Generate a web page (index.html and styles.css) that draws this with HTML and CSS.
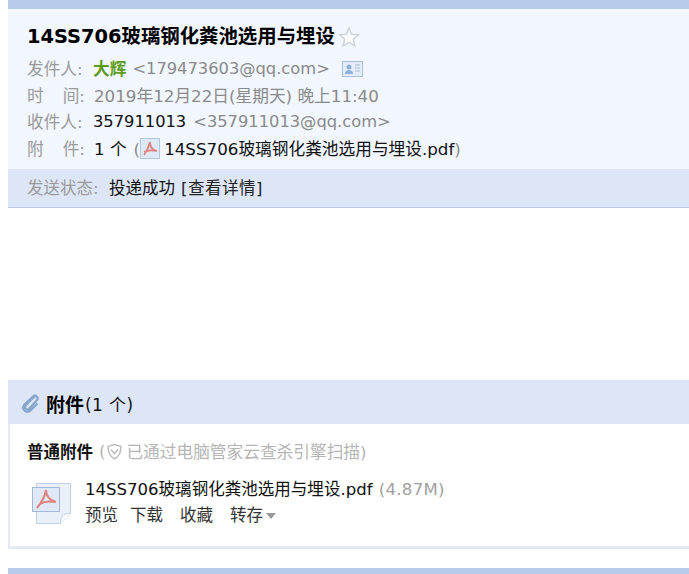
FILE: index.html
```html
<!DOCTYPE html>
<html lang="zh-CN">
<head>
    <meta charset="UTF-8">
    <meta name="viewport" content="width=device-width, initial-scale=1.0">
    <title>14SS706玻璃钢化粪池选用与埋设</title>
    <link rel="stylesheet" href="styles.css">
</head>
<body>
    <div class="bar"></div>
    <div class="mailhead">
        <h1 class="subject">14SS706玻璃钢化粪池选用与埋设
            <svg class="star" width="22" height="22" viewBox="0 0 22 22"><path d="M11 2l2.700 6.200 6.600.6-5 4.400 1.500 6.600L11 16.300l-5.800 3.500 1.500-6.600-5-4.400 6.600-.6z" fill="#fbfcfe" stroke="#ccd3dc" stroke-width="1.500"/></svg>
        </h1>
        <div class="row"><span class="lbl">发件人:</span><b class="sender">大辉</b><span class="gray email">&lt;179473603@qq.com&gt;</span>
            <svg class="card" width="21" height="16" viewBox="0 0 21 16"><rect x=".5" y=".5" width="20" height="15" fill="#e4ecf7" stroke="#a9bfdb"/><circle cx="7" cy="6" r="2.500" fill="#8fb0d8"/><path d="M3 13c0-3 2-4 4-4s4 1 4 4z" fill="#8fb0d8"/><path d="M13 4h5M13 7h5M13 10h5" stroke="#a3b8d3"/></svg>
        </div>
        <div class="row"><span class="lbl split"><span>时</span><span>间:</span></span><span class="gray">2019年12月22日(星期天) 晚上11:40</span></div>
        <div class="row"><span class="lbl">收件人:</span><span class="email">357911013</span><span class="gray email addr">&lt;357911013@qq.com&gt;</span></div>
        <div class="row"><span class="lbl split"><span>附</span><span>件:</span></span><span>1 个</span><span class="gray paren">(</span>
            <svg class="pdf" width="20" height="21" viewBox="0 0 20 21"><rect x=".5" y=".5" width="19" height="20" fill="#dfe8f5" stroke="#b4c7e0"/><path d="M10 4c-1 4-3 9-6 13M10 4c0 4 2 8 7 9M4 14c4-2 8-2 12-1" fill="none" stroke="#e0827e" stroke-width="1.800"/></svg>
            <span class="attname">14SS706玻璃钢化粪池选用与埋设.pdf<span class="gray">)</span></span>
        </div>
    </div>
    <div class="status"><span class="statuslbl">发送状态:</span><span>投递成功</span><span class="detail">[查看详情]</span></div>

    <div class="gap"></div>

    <div class="attach">
        <div class="attach-title">
            <svg class="clip" width="20" height="22" viewBox="0 0 20 22"><path d="M15 3L5 13c-2.500 3 1 6 3.500 3.500l7.500-8.500c2-2.500-1.500-5.500-4-3.500L3 13c-3 4.500 2.500 9 6.500 5.500l7-7" fill="none" stroke="#88a6cb" stroke-width="2.200"/></svg>
            <b>附件</b><span class="count">(1 个)</span>
        </div>
        <div class="attach-body">
            <div class="kind"><b>普通附件</b><span class="scan">(
                <svg class="shield" width="17" height="17" viewBox="0 0 17 17"><path d="M8.500 1.500l6.500 2c0 6-2 10-6.500 12.500C4 13.500 2 9.500 2 3.500z" fill="none" stroke="#bdbdbd" stroke-width="1.500"/><path d="M5 6.500l3.500 4 3.500-4" fill="none" stroke="#bdbdbd" stroke-width="1.500"/></svg>
                <span class="scantext">已通过电脑管家云查杀引擎扫描)</span></span></div>
            <div class="file">
                <svg class="bigpdf" width="40" height="42" viewBox="0 0 40 42"><path d="M4.500 .5h34v30l-10 10h-24z" fill="#eaf0f9" stroke="#bfd0e6"/><path d="M28.500 40.500c0-7 2-10 10-10" fill="#fff" stroke="#bfd0e6"/><rect x=".5" y="4.500" width="27" height="24" fill="#dfe8f5" stroke="#a3b8d4"/><path d="M14 7c-1 6-4 12-9 18M14 7c0 5 3 10 10 12M8 21c5-3 10-3 15-2" fill="none" stroke="#e0827e" stroke-width="2"/></svg>
                <div class="fileinfo">
                    <div class="filename">14SS706玻璃钢化粪池选用与埋设.pdf <span class="size">(4.87M)</span></div>
                    <div class="actions"><span>预览</span><span>下载</span><span>收藏</span><span>转存<i class="caret"></i></span></div>
                </div>
            </div>
        </div>
    </div>

    <div class="gap2"></div>
    <div class="bar"></div>
</body>
</html>
```

FILE: styles.css
```css
body {
    margin: 0;
    padding-left: 8px;
    background: #fff;
    color: #111;
    font-family: "DejaVu Sans", "Noto Sans CJK SC", sans-serif;
    font-size: 16.700px;
    overflow: hidden;
}
.bar {
    height: 9px;
    background: #b6caea;
}
.mailhead {
    height: 160px;
    box-sizing: border-box;
    padding: 14px 0 0 19px;
    background: #f2f6fe;
}
.subject {
    margin: 0 0 6px;
    height: 27px;
    line-height: 27px;
    font-size: 19.400px;
    color: #000;
    display: flex;
    align-items: center;
    gap: 3px;
}
.row {
    height: 26.500px;
    line-height: 26.500px;
    display: flex;
    align-items: center;
    white-space: pre;
}
.lbl {
    width: 66px;
    flex: none;
    color: #9a9a9a;
}
.split {
    display: flex;
    justify-content: space-between;
    width: 58px;
    margin-right: 9px;
}
.gray {
    color: #8a8a8a;
}
.email {
    font-size: 16.300px;
}
.sender {
    color: #5f9c1c;
}
.sender + .gray {
    margin-left: 6px;
}
.addr {
    margin-left: 7px;
}
.card {
    margin-left: 12px;
}
.row .paren {
    margin-left: 7px;
}
.pdf {
    margin: 0 4px 0 0;
}
.status {
    height: 39px;
    box-sizing: border-box;
    padding: 0 0 3px 19px;
    background: #dde6f6;
    border-bottom: 1px solid #b9c8dc;
    display: flex;
    align-items: center;
    font-size: 16.500px;
}
.statuslbl {
    width: 82px;
    color: #9a9a9a;
}
.detail {
    margin-left: 6px;
    letter-spacing: .5px;
    color: #222;
}
.gap {
    height: 172px;
}
.attach-title {
    height: 44px;
    box-sizing: border-box;
    padding: 2px 0 0 13px;
    background: #dde6f6;
    display: flex;
    align-items: center;
}
.attach-title b {
    margin-left: 5px;
    font-size: 19px;
    color: #000;
}
.clip {
    flex: none;
}
.count {
    font-size: 17px;
    margin-left: 1px;
    letter-spacing: .4px;
}
.attach-body {
    height: 125px;
    box-sizing: border-box;
    padding: 14px 0 0 17px;
    border-left: 2px solid #e3eaf6;
    border-bottom: 3px solid #e3eaf6;
    font-size: 16.500px;
}
.kind {
    display: flex;
    align-items: center;
    height: 26px;
}
.kind b {
    color: #111;
}
.scan {
    margin-left: 6px;
    color: #b5b5b5;
    display: flex;
    align-items: center;
    gap: 1px;
}
.scantext {
    margin-left: 2px;
    font-size: 16.700px;
}
.file {
    display: flex;
    margin-top: 13px;
}
.bigpdf {
    margin: 6px 13px 0 5px;
}
.filename {
    line-height: 26px;
    font-size: 16.550px;
}
.size {
    color: #a0a0a0;
    margin-left: 1px;
    letter-spacing: .3px;
}
.actions {
    display: flex;
    gap: 17px;
    line-height: 26px;
    color: #333;
}
.actions span:first-child {
    margin-right: -5px;
}
.caret {
    display: inline-block;
    margin: 0 0 2px 3px;
    border: 5px solid transparent;
    border-top: 6px solid #999;
    border-bottom: 0;
}
.gap2 {
    height: 19px;
}
```
